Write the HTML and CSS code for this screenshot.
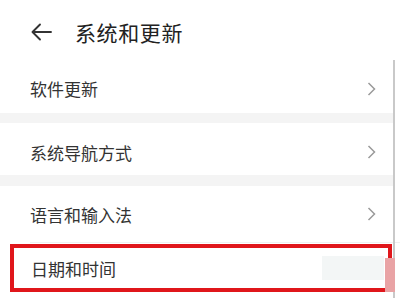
FILE: index.html
```html
<!DOCTYPE html>
<html lang="zh">
<head>
<meta charset="utf-8">
<link rel="stylesheet" href="styles.css">
</head>
<body>
<div class="page">
  <header class="header">
    <svg class="back" width="22" height="18" viewBox="0 0 22 18">
      <path d="M20 9 H2 M9 1.5 L1.5 9 L9 16.5" fill="none" stroke="#333" stroke-width="1.9" stroke-linecap="round" stroke-linejoin="round"/>
    </svg>
    <h1 class="title">系统和更新</h1>
  </header>
  <div class="row row1">
    <span class="label">软件更新</span>
    <svg class="chev" width="9" height="14" viewBox="0 0 9 14"><path d="M1.5 1 L7.5 7 L1.5 13" fill="none" stroke="#9a9a9a" stroke-width="1.5"/></svg>
  </div>
  <div class="band band1"></div>
  <div class="row row2">
    <span class="label">系统导航方式</span>
    <svg class="chev" width="9" height="14" viewBox="0 0 9 14"><path d="M1.5 1 L7.5 7 L1.5 13" fill="none" stroke="#9a9a9a" stroke-width="1.5"/></svg>
  </div>
  <div class="band band2"></div>
  <div class="row row3">
    <span class="label">语言和输入法</span>
    <svg class="chev" width="9" height="14" viewBox="0 0 9 14"><path d="M1.5 1 L7.5 7 L1.5 13" fill="none" stroke="#9a9a9a" stroke-width="1.5"/></svg>
  </div>
  <div class="highlight">
    <span class="label">日期和时间</span>
  </div>
  <div class="scrollbar"></div>
  <div class="smudge"></div>
  <div class="pink"></div>
</div>
</body>
</html>
```
FILE: styles.css
```css
html, body {
  margin: 0;
  padding: 0;
  background: #ffffff;
}
.page {
  position: relative;
  width: 400px;
  height: 298px;
  overflow: hidden;
  font-family: "Noto Sans CJK SC", "Noto Sans", sans-serif;
  color: #333;
}
.header {
  height: 64px;
  display: flex;
  align-items: center;
  padding-left: 31px;
  box-sizing: border-box;
}
.back {
  display: block;
}
.title {
  margin: 0 0 0 22px;
  font-size: 21px;
  font-weight: 400;
  color: #222;
  letter-spacing: 0.6px;
  line-height: 1;
}
.row {
  display: flex;
  align-items: center;
  justify-content: space-between;
  padding: 0 24px 0 30px;
  box-sizing: border-box;
}
.row1 { height: 49px; }
.row2 { height: 52px; padding-top: 6px; }
.row3 { height: 57px; padding-top: 0; border-bottom: 1px solid #f0f0f0; margin-left: 30px; padding-left: 0; }
.label {
  font-size: 17px;
  line-height: 1;
  color: #333;
}
.chev { display: block; }
.band {
  background: #f4f4f4;
  margin-right: 7px;
}
.band1 { height: 10px; }
.band2 { height: 11px; }
.highlight {
  margin: 1px 8px 0 10px;
  height: 48px;
  border: 4px solid #e0161b;
  box-sizing: border-box;
  display: flex;
  align-items: center;
  padding-left: 17px;
}
.scrollbar {
  position: absolute;
  left: 393px;
  top: 60px;
  width: 2px;
  bottom: 0;
  background: #c9c9c9;
}
.smudge {
  position: absolute;
  left: 322px;
  top: 256px;
  width: 62px;
  height: 24px;
  background: #f3f6f6;
}
.pink {
  position: absolute;
  left: 385px;
  top: 258px;
  width: 10px;
  height: 34px;
  background: #e9a3a5;
}
```
